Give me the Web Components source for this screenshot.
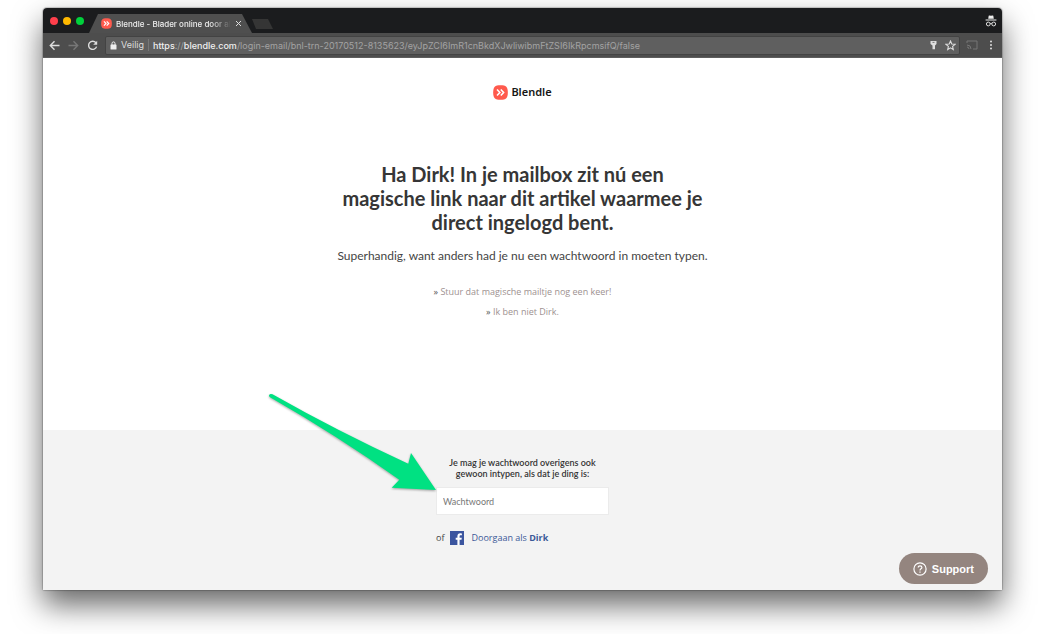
<!DOCTYPE html>
<html lang="nl">
<head>
<meta charset="utf-8">
<meta name="viewport" content="width=device-width, initial-scale=1">
<title>Blendle - Blader online door alle kranten</title>
<style>
  html { background: #fff; }
  body { margin: 0; min-height: 100vh; box-sizing: border-box; padding: 8px 37px 44px 43px; display: flex; font-family: Lato, "Liberation Sans", sans-serif; color: #333; overflow: hidden; }
</style>
</head>
<body>
<browser-window>
  <tab-strip slot="chrome">Blendle - Blader online door alle kranten</tab-strip>
  <address-bar slot="chrome"></address-bar>
  <login-message></login-message>
  <password-panel></password-panel>
  <support-button>Support</support-button>
</browser-window>

<script>
const define = (name, html) => {
  const template = document.createElement('template');
  template.innerHTML = html;
  customElements.define(name, class extends HTMLElement {
    constructor() {
      super();
      this.attachShadow({ mode: 'open' }).append(template.content.cloneNode(true));
    }
  });
};

define('browser-window', `
<style>
  :host { flex: 1; min-width: 0; display: flex; flex-direction: column; position: relative; border-radius: 4px 4px 2px 2px; background: #fff; box-shadow: 0 0 1px 1px rgba(0,0,0,.2), 0 15px 30px rgba(0,0,0,.6); }
  header { flex: none; }
  main { flex: 1; display: flex; flex-direction: column; }
</style>
<header><slot name="chrome"></slot></header>
<main><slot></slot></main>`);

define('blendle-mark', `
<style>
  :host { display: block; width: 15px; height: 15px; flex: none; }
  svg { display: block; width: 100%; height: 100%; }
</style>
<svg viewBox="0 0 16 16" aria-hidden="true"><path d="M8 0.2C14 .2 15.8 2 15.8 8S14 15.8 8 15.8.2 14 .2 8 2 .2 8 .2Z" fill="#ff5a4d"/><path d="M4.3 4.8 7.3 8l-3 3.2M8.3 4.8l3 3.2-3 3.2" fill="none" stroke="#fff" stroke-width="1.7"/></svg>`);

define('tab-strip', `
<style>
  :host { display: flex; align-items: flex-end; height: 25px; background: #1b1c1e; border-radius: 4px 4px 0 0; font: 500 8px/18px Inter, sans-serif; color: #eee; }
  .lights { display: flex; gap: 5px; align-self: center; padding: 0 5px 0 7px; }
  .lights button { width: 8px; height: 8px; border-radius: 50%; border: 0; padding: 0; background: #ff3f4c; }
  .lights button:nth-child(2) { background: #ffb900; }
  .lights button:nth-child(3) { background: #00d13c; }
  .tab { box-sizing: border-box; width: 163px; height: 19px; padding: 0 10px 0 12px; display: flex; align-items: center; gap: 4px; background: #4f4f4f; clip-path: polygon(9px 0, 153px 0, 163px 100%, 0 100%); }
  .tab blendle-mark { width: 11px; height: 11px; }
  .title { flex: 1; overflow: hidden; white-space: nowrap; -webkit-mask-image: linear-gradient(90deg, #000 82%, transparent); mask-image: linear-gradient(90deg, #000 82%, transparent); }
  .tab button { width: 7px; height: 7px; padding: 0; border: 0; background: none; display: flex; }
  .new { width: 21px; height: 10px; margin: 0 0 4px; padding: 0; border: 0; background: #353535; clip-path: polygon(0 0, 16px 0, 21px 10px, 4px 10px); }
  .incognito { width: 12px; height: 12px; margin: 0 5px 0 auto; align-self: center; }
</style>
<div class="lights"><button aria-label="Sluiten"></button><button aria-label="Minimaliseren"></button><button aria-label="Vergroten"></button></div>
<div class="tab"><blendle-mark></blendle-mark><span class="title"><slot></slot></span><button aria-label="Tabblad sluiten"><svg width="7" height="7" viewBox="0 0 7 7"><path d="m1 1 5 5M6 1 1 6" stroke="#ddd"/></svg></button></div>
<button class="new" aria-label="Nieuw tabblad"></button>
<svg class="incognito" viewBox="0 0 12 12" aria-label="Incognito"><path d="M3.2 3.8 3.7.8Q3.8.3 4.4.4L6 .8 7.600.4Q8.200.3 8.300.8l.5 3ZM.6 4.500h10.800v1H.6Z" fill="#eee"/><g fill="none" stroke="#ddd"><circle cx="3.300" cy="9" r="1.900"/><circle cx="8.700" cy="9" r="1.900"/><path d="M5.200 8.500q.8-.5 1.600 0"/></g></svg>`);

define('address-bar', `
<style>
  :host { box-sizing: border-box; display: flex; align-items: center; height: 25px; padding: 0 5px 0 6px; background: #4d4d4d; border-bottom: 1px solid #5d5d5d; color: #a3a3a3; }
  button { padding: 0; border: 0; background: none; display: flex; color: inherit; }
  svg { display: block; fill: none; stroke: currentColor; stroke-width: 1.4; }
  nav { display: flex; gap: 8px; color: #ddd; }
  nav .off { color: #777; }
  .field { flex: 1; min-width: 0; box-sizing: border-box; height: 19px; margin-left: 7px; padding: 0 3px 0 4px; display: flex; align-items: center; background: #5f5f5f; border: 1px solid #434343; border-radius: 2px; font: 9px/17px Inter, sans-serif; white-space: nowrap; }
  .safe { color: #ddd; padding: 0 4px; border-right: 1px solid #777; line-height: 12px; }
  .url { flex: 1; min-width: 0; overflow: hidden; padding-left: 4px; }
  b { font-weight: 500; color: #f0f0f0; }
  .icons { display: flex; gap: 7px; align-items: center; color: #ddd; }
  .tools { display: flex; gap: 9px; align-items: center; padding: 0 2px 0 6px; color: #777; }
</style>
<nav>
  <button aria-label="Terug"><svg width="11" height="11" viewBox="0 0 11 11"><path d="M10.500 5.500H1.500M5.500 1.200 1.300 5.500l4.200 4.300"/></svg></button>
  <button class="off" aria-label="Vooruit"><svg width="11" height="11" viewBox="0 0 11 11"><path d="M.5 5.500h9M5.500 1.200l4.200 4.300-4.200 4.300"/></svg></button>
  <button aria-label="Vernieuwen"><svg width="11" height="11" viewBox="0 0 11 11"><path d="M8.900 2.700A4.100 4.100 0 1 0 9.600 6.600"/><path d="M10.200.8v4H6.200Z" fill="currentColor" stroke="none"/></svg></button>
</nav>
<div class="field">
  <svg width="7" height="9" viewBox="0 0 7 9" style="color:#eee" aria-hidden="true"><rect x=".5" y="3.500" width="6" height="5" rx=".6" fill="currentColor" stroke="none"/><path d="M2 4V2.400a1.500 1.500 0 0 1 3 0V4" stroke-width="1"/></svg>
  <span class="safe">Veilig</span>
  <span class="url"><b>https</b>://<b>blendle.com</b>/login-email/bnl-trn-20170512-8135623/eyJpZCI6ImR1cnBkdXJwliwibmFtZSI6IkRpcmsifQ/false</span>
  <span class="icons">
    <button aria-label="Wachtwoord opgeslagen"><svg width="9" height="10" viewBox="0 0 9 10"><path d="M1.500 1h6v3L6 5.500v3.800H3.500V5.500L1.500 4Z" fill="currentColor" stroke="none"/><path d="M3.500 2.400h2" stroke="#5f5f5f" stroke-width=".8"/></svg></button>
    <button aria-label="Bladwijzer"><svg width="11" height="11" viewBox="0 0 11 11"><path d="m5.500 1 1.300 3 3.200.3-2.400 2.100.7 3.200-2.800-1.700-2.800 1.700.7-3.200L1 4.300 4.200 4Z" style="stroke-width:1.1"/></svg></button>
  </span>
</div>
<div class="tools">
  <button aria-label="Casten"><svg width="12" height="10" viewBox="0 0 12 10"><path d="M1 3V1h10v8H7M1 5a4 4 0 0 1 4 4M1 7a2 2 0 0 1 2 2" style="stroke-width:1"/></svg></button>
  <button aria-label="Menu"><svg width="8" height="10" viewBox="0 0 8 10" style="fill:#ddd;stroke:none"><circle cx="4" cy="1.500" r="1"/><circle cx="4" cy="5" r="1"/><circle cx="4" cy="8.500" r="1"/></svg></button>
</div>`);

define('login-message', `
<style>
  :host { flex: 1; display: flex; flex-direction: column; align-items: center; padding: 26px 16px 32px; text-align: center; background: #fff; }
  .logo { display: flex; align-items: center; gap: 3px; color: #161616; text-decoration: none; font: 600 11px/16px "Noto Sans", sans-serif; }
  h1 { max-width: 380px; margin: 62px 0 0; font: 700 20px/24px Lato, sans-serif; color: #363636; }
  p { margin: 12px 0 0; font: 12px/20px Lato, sans-serif; color: #444; }
  ul { list-style: none; margin: 16px 0 0; padding: 0; font: 9px/20px "Open Sans", sans-serif; }
  li { color: #555; }
  li a { color: #9d9190; text-decoration: none; }
</style>
<a class="logo" href="#"><blendle-mark></blendle-mark>Blendle</a>
<h1>Ha Dirk! In je mailbox zit nú een<br>magische link naar dit artikel waarmee je<br>direct ingelogd bent.</h1>
<p>Superhandig, want anders had je nu een wachtwoord in moeten typen.</p>
<ul><li>» <a href="#">Stuur dat magische mailtje nog een keer!</a></li><li>» <a href="#">Ik ben niet Dirk.</a></li></ul>`);

define('pointer-arrow', `
<style>
  :host { display: block; width: 170px; height: 104px; pointer-events: none; }
  svg { display: block; overflow: visible; filter: drop-shadow(0 1px 1px rgba(0,0,0,.35)); }
</style>
<svg width="170" height="104" viewBox="0 0 170 104" aria-hidden="true"><path d="M3 3.300Q4 1.300 6.500 2.300Q73 40 142.300 71.700L145 61 170 98 125.700 95.800 133.300 87.700Q70 43 4 5.300Q2.700 4.400 3 3.300Z" fill="#00e182"/></svg>`);

define('password-panel', `
<style>
  :host { display: block; padding: 27px 16px 45px; background: #f3f3f3; }
  form { width: 173px; margin: 0 auto; }
  label { display: block; text-align: center; font: 600 9px/11px Lato, sans-serif; color: #333; }
  .entry { position: relative; margin-top: 8px; }
  input { display: block; box-sizing: border-box; width: 100%; height: 28px; padding: 0 6px; border: 1px solid #ebebeb; background: #fff; font: 9px/12px Lato, sans-serif; color: #333; }
  input::placeholder { color: #777; opacity: 1; }
  pointer-arrow { position: absolute; right: 100%; bottom: 19px; }
  .or { display: flex; align-items: center; margin-top: 16px; font: 9px/14px "Open Sans", sans-serif; color: #444; }
  .or a { display: flex; align-items: center; gap: 7px; margin-left: 6px; color: #3b5998; text-decoration: none; }
</style>
<form>
  <label for="pw">Je mag je wachtwoord overigens ook<br>gewoon intypen, als dat je ding is:</label>
  <div class="entry"><input id="pw" type="password" placeholder="Wachtwoord"><pointer-arrow></pointer-arrow></div>
  <div class="or">of <a href="#"><svg width="14" height="14" viewBox="0 0 14 14" aria-hidden="true"><path d="M0 0h14v14H0Z" fill="#3b559f"/><path d="M7.400 14V8.700H5.700v-2h1.700V5.200C7.400 3.300 8.500 2.300 10.200 2.300l1.700.1v1.900h-1.200c-.9 0-1.100.4-1.100 1.100v1.300h2.200l-.3 2H9.600V14Z" fill="#fff"/></svg><span>Doorgaan als <b>Dirk</b></span></a></div>
</form>`);

define('support-button', `
<style>
  :host { display: block; position: absolute; right: 14px; bottom: 6px; }
  button { display: flex; align-items: center; gap: 5px; height: 31px; padding: 0 14px; border: 0; border-radius: 16px; background: #94857f; color: #fff; font: 700 11px/16px "Liberation Sans", sans-serif; }
</style>
<button><svg width="14" height="14" viewBox="0 0 14 14" fill="none" stroke="#fff" stroke-width="1.200" aria-hidden="true"><circle cx="7" cy="7" r="6.100"/><path d="M5.200 5.600C5.200 3.200 8.900 3.300 8.900 5.500 8.900 6.900 7 6.800 7 8.400"/><path d="M7 9.400v1.300"/></svg><slot></slot></button>`);
</script>
</body>
</html>
